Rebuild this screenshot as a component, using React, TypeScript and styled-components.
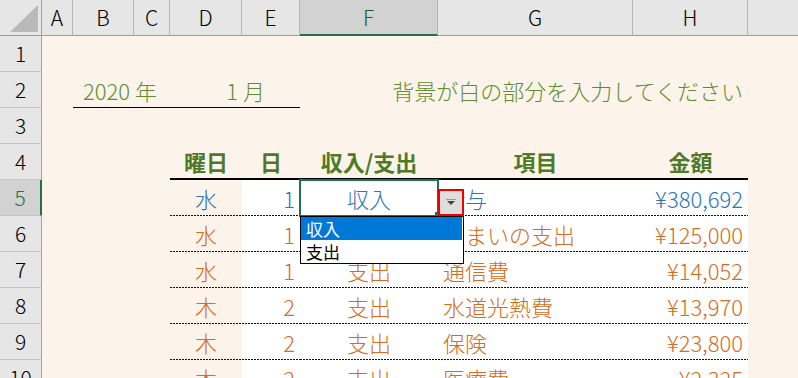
import React from 'react';
import styled, { createGlobalStyle } from 'styled-components';

const GlobalStyle = createGlobalStyle`
  html, body { margin: 0; padding: 0; background: #fcf3ea; }
  body { font-family: "Noto Sans CJK JP", "Noto Sans", sans-serif; }
`;

const COLS = '42px 31px 61px 36px 72px 58px 138px 195px 115px 1fr';
const FONT = '"Noto Sans CJK JP", "Noto Sans", sans-serif';

type Tone = 'blue' | 'orange' | 'green' | 'note' | 'ink';
const TONE: Record<Tone, string> = {
  blue: '#2e75b6',
  orange: '#d46c22',
  green: '#4e7a27',
  note: '#5e8e30',
  ink: '#000000',
};

const Sheet = styled.div`
  width: 798px;
  height: 378px;
  overflow: hidden;
  background: #fcf3ea;
  font-family: ${FONT};
  font-size: 22px;
  font-weight: 300;
  line-height: 1;
`;

const Row = styled.div`
  display: grid;
  grid-template-columns: ${COLS};
  height: 36px;
`;

const Corner = styled.div`
  position: relative;
  box-sizing: border-box;
  background: #e6e6e6;
  border-right: 1px solid #a3a3a3;
  border-bottom: 1px solid #9d9d9d;
  &::after {
    content: '';
    position: absolute;
    right: 3px;
    bottom: 3px;
    width: 28px;
    height: 27px;
    background: #b9b9b9;
    clip-path: polygon(100% 0, 100% 100%, 0 100%);
  }
`;

const ColHead = styled.div<{ $active?: boolean; $last?: boolean }>`
  box-sizing: border-box;
  display: flex;
  align-items: center;
  justify-content: center;
  font-size: 21px;
  color: ${p => (p.$active ? '#1d5c37' : '#000')};
  background: ${p => (p.$active ? '#d2d2d2' : '#e6e6e6')};
  border-right: ${p => (p.$last ? 'none' : '1px solid #b5b5b5')};
  border-bottom: ${p => (p.$active ? '2px solid #217346' : '1px solid #9d9d9d')};
`;

const RowHead = styled.div<{ $active?: boolean }>`
  box-sizing: border-box;
  display: flex;
  align-items: center;
  justify-content: center;
  font-size: 21px;
  color: ${p => (p.$active ? '#217346' : '#000')};
  background: ${p => (p.$active ? '#d2d2d2' : '#e6e6e6')};
  border-right: ${p => (p.$active ? '2px solid #217346' : '1px solid #a3a3a3')};
  border-bottom: 1px solid #c4c4c4;
`;

type Align = 'left' | 'center' | 'right';
const JUSTIFY: Record<Align, string> = { left: 'flex-start', center: 'center', right: 'flex-end' };
const DOTS = 'repeating-linear-gradient(to right, #111 0 2px, transparent 2px 3px) left bottom / 100% 1px no-repeat';

const Cell = styled.div<{ $align?: Align; $tone?: Tone; $white?: boolean; $dotted?: boolean; $span?: number }>`
  position: relative;
  box-sizing: border-box;
  display: flex;
  align-items: center;
  justify-content: ${p => JUSTIFY[p.$align ?? 'left']};
  padding: 0 5px;
  white-space: nowrap;
  color: ${p => TONE[p.$tone ?? 'ink']};
  grid-column: ${p => (p.$span ? `span ${p.$span}` : 'auto')};
  background: ${p =>
    [p.$dotted ? DOTS : null, p.$white ? '#ffffff' : 'transparent'].filter(Boolean).join(', ')};
`;

const PeriodCell = styled(Cell)`
  justify-content: space-between;
  padding: 0 35px 0 10px;
  border-bottom: 1px solid #000;
`;

const HeadCell = styled(Cell)`
  justify-content: center;
  font-weight: 700;
  color: ${TONE.green};
  border-bottom: 2px solid #000;
`;

const SelectionFrame = styled.div`
  position: absolute;
  left: -1px;
  top: -1px;
  right: -1px;
  bottom: -1px;
  border: 2px solid #217346;
  pointer-events: none;
  z-index: 2;
`;

const FillHandle = styled.div`
  position: absolute;
  left: 135px;
  top: 32px;
  width: 5px;
  height: 5px;
  background: #217346;
  z-index: 2;
`;

const DropButton = styled.div`
  position: absolute;
  left: 138px;
  top: 9px;
  width: 26px;
  height: 27px;
  box-sizing: border-box;
  border: 2px solid #f00000;
  background: #dedede;
  display: flex;
  align-items: center;
  justify-content: center;
  z-index: 4;
`;

const DropList = styled.div`
  position: absolute;
  left: 0;
  top: 100%;
  width: 164px;
  height: 48px;
  box-sizing: border-box;
  border: 1px solid #000;
  background: #fff;
  z-index: 3;
  font-size: 17px;
  font-weight: 400;
`;

const DropItem = styled.div<{ $selected?: boolean }>`
  height: 23px;
  margin-right: 1px;
  padding-left: 5px;
  display: flex;
  align-items: center;
  color: ${p => (p.$selected ? '#fff' : '#000')};
  background: ${p => (p.$selected ? '#0078d7' : 'transparent')};
`;

const LETTERS = ['A', 'B', 'C', 'D', 'E', 'F', 'G', 'H'];

type Entry = { n: number; day: string; d: string; kind: string; item: string; amt: string; tone: Tone };
const ENTRIES: Entry[] = [
  { n: 5, day: '水', d: '1', kind: '収入', item: '給与', amt: '¥380,692', tone: 'blue' },
  { n: 6, day: '水', d: '1', kind: '支出', item: '住まいの支出', amt: '¥125,000', tone: 'orange' },
  { n: 7, day: '水', d: '1', kind: '支出', item: '通信費', amt: '¥14,052', tone: 'orange' },
  { n: 8, day: '木', d: '2', kind: '支出', item: '水道光熱費', amt: '¥13,970', tone: 'orange' },
  { n: 9, day: '木', d: '2', kind: '支出', item: '保険', amt: '¥23,800', tone: 'orange' },
  { n: 10, day: '木', d: '2', kind: '支出', item: '医療費', amt: '¥2,325', tone: 'orange' },
];

const Arrow = () => (
  <svg width="10" height="7" viewBox="0 0 10 7">
    <rect x="0" y="0" width="10" height="1" fill="#9a9a9a" />
    <polygon points="1,2 9,2 5,6" fill="#3b4a3d" />
  </svg>
);

export default function App() {
  return (
    <>
      <GlobalStyle />
      <Sheet>
        <Row>
          <Corner />
          {LETTERS.map(l => (
            <ColHead key={l} $active={l === 'F'}>{l}</ColHead>
          ))}
          <ColHead $last />
        </Row>

        <Row>
          <RowHead>1</RowHead>
        </Row>

        <Row>
          <RowHead>2</RowHead>
          <Cell />
          <PeriodCell $span={4} $tone="note">
            <span>2020 年</span>
            <span>1 月</span>
          </PeriodCell>
          <Cell $span={3} $align="right" $tone="note">背景が白の部分を入力してください</Cell>
        </Row>

        <Row>
          <RowHead>3</RowHead>
        </Row>

        <Row>
          <RowHead>4</RowHead>
          <Cell />
          <Cell />
          <Cell />
          <HeadCell>曜日</HeadCell>
          <HeadCell>日</HeadCell>
          <HeadCell>収入/支出</HeadCell>
          <HeadCell>項目</HeadCell>
          <HeadCell>金額</HeadCell>
        </Row>

        {ENTRIES.map(e => {
          const active = e.n === 5;
          return (
            <Row key={e.n}>
              <RowHead $active={active}>{e.n}</RowHead>
              <Cell />
              <Cell />
              <Cell />
              <Cell $align="center" $tone={e.tone} $dotted>{e.day}</Cell>
              <Cell $align="right" $tone={e.tone} $dotted $white>{e.d}</Cell>
              <Cell $align="center" $tone={e.tone} $dotted={!active} $white>
                {e.kind}
                {active && (
                  <>
                    <SelectionFrame />
                    <FillHandle />
                    <DropButton>
                      <Arrow />
                    </DropButton>
                    <DropList>
                      <DropItem $selected>収入</DropItem>
                      <DropItem>支出</DropItem>
                    </DropList>
                  </>
                )}
              </Cell>
              <Cell $align="left" $tone={e.tone} $dotted $white>{e.item}</Cell>
              <Cell $align="right" $tone={e.tone} $dotted $white>{e.amt}</Cell>
            </Row>
          );
        })}
      </Sheet>
    </>
  );
}
